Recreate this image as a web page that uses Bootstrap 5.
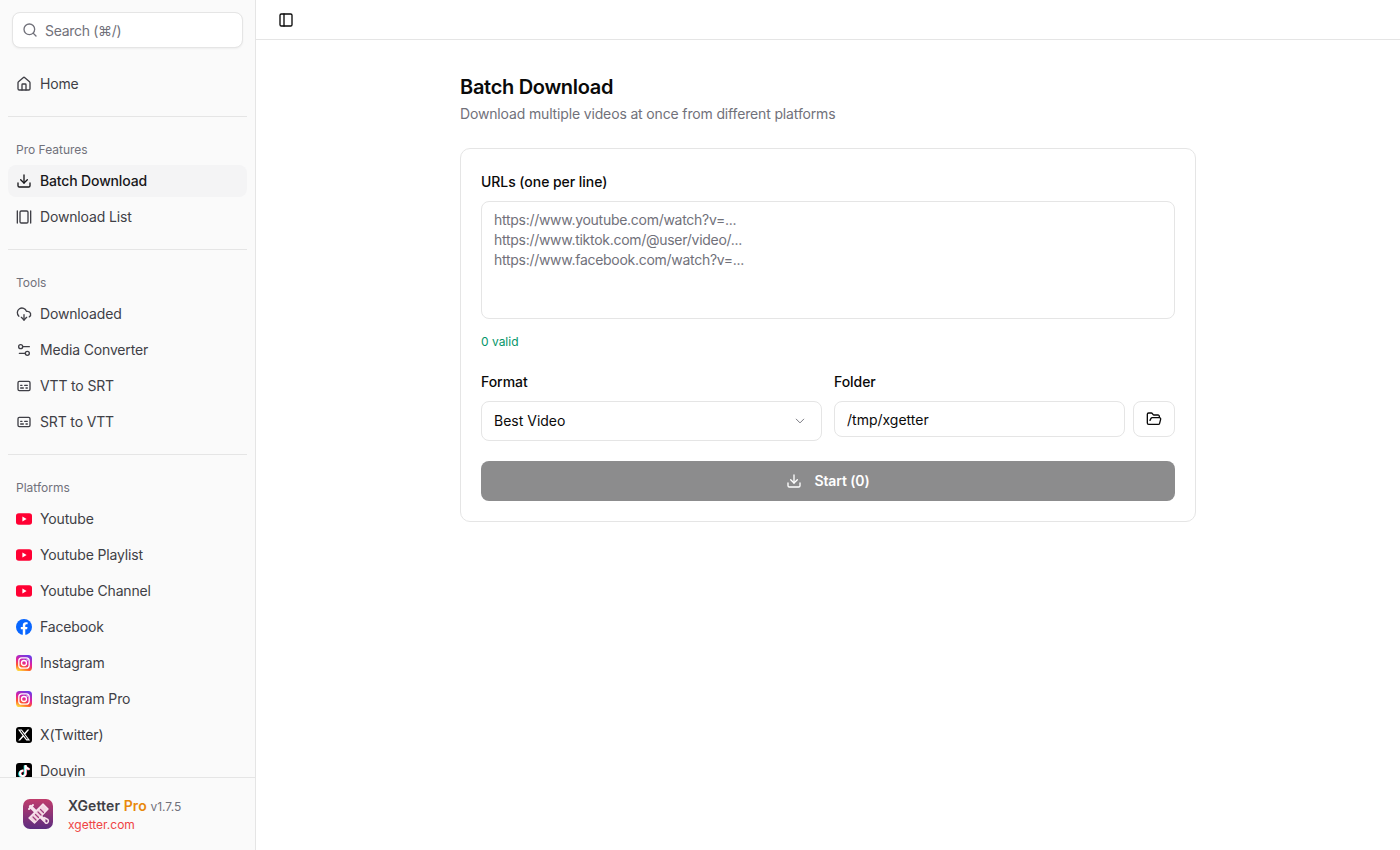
<!DOCTYPE html>
<html lang="en">
<head>
    <meta charset="UTF-8">
    <meta name="viewport" content="width=device-width, initial-scale=1.0">
    <title>XGetter Pro - Batch Download</title>
    <link href="https://cdn.jsdelivr.net/npm/bootstrap@5.3.0/dist/css/bootstrap.min.css" rel="stylesheet">
    <style>
        body { font-family: Inter, "Liberation Sans", sans-serif; font-size: 14px; letter-spacing: -.15px; color: #0a0a0a; overflow: hidden; }
        .icon { width: 16px; height: 16px; flex: none; fill: none; stroke: currentColor; stroke-width: 2; stroke-linecap: round; stroke-linejoin: round; }
        .brand { width: 16px; height: 16px; flex: none; }

        .sidebar { width: 256px; flex: none; background: #fafafa; border-right: 1px solid #e5e5e5; }
        .search-box { padding: 12px 12px 0; }
        .search-box .form-control { height: 36px; padding: 0 12px 0 32px; font-size: 14px; letter-spacing: -.3px; border-color: #e5e5e5; border-radius: 8px; box-shadow: 0 1px 2px rgba(0,0,0,.05); }
        .search-box .form-control::placeholder, .urls::placeholder { color: #71717a; opacity: 1; }
        .search-box .icon { left: 10px; top: 10px; color: #71717a; }
        .side-scroll { padding: 20px 8px 0; min-height: 0; }
        .side-link { height: 32px; padding: 0 8px; gap: 8px; border-radius: 8px; line-height: 20px; color: #3f3f46; text-decoration: none; }
        .side-link.active { background: #f4f4f5; color: #18181b; font-weight: 500; }
        .side-label { height: 32px; padding: 1px 8px 0; font-size: 12px; line-height: 16px; letter-spacing: 0; color: #71717a; }
        .side-sep { margin: 16px 0; border-top: 1px solid #e5e5e5; opacity: 1; }
        .side-foot { height: 73px; padding: 0 23px; gap: 15px; border-top: 1px solid #e5e5e5; flex: none; }
        .foot-name { font-size: 14px; line-height: 20px; letter-spacing: .1px; font-weight: 600; color: #3f3f46; padding-top: 2px; }
        .foot-name b { font-weight: 600; color: #e8890c; }
        .foot-name span { font-size: 12px; font-weight: 400; letter-spacing: 0; color: #71717a; }
        .foot-url { font-size: 12px; line-height: 16px; margin-bottom: 2px; letter-spacing: 0; color: #ef4444; text-decoration: none; }

        .topbar { height: 40px; padding: 0 22px; border-bottom: 1px solid #e5e5e5; flex: none; }
        .panel { width: 736px; padding-top: 35px; }
        .panel h1 { font-size: 20px; line-height: 24px; font-weight: 600; letter-spacing: -.3px; margin: 0; color: #0a0a0a; }
        .panel .sub { margin: 5px 0 24px; line-height: 20px; color: #71717a; }
        .panel .card { border-color: #e5e5e5; border-radius: 10px; padding: 23px 20px 20px; }
        .panel label { display: block; font-weight: 500; line-height: 20px; letter-spacing: -.05px; margin-bottom: 9px; color: #0a0a0a; }
        .urls, .panel .form-control, .panel .form-select { font-size: 14px; line-height: 20px; color: #0a0a0a; border-color: #e5e5e5; border-radius: 8px; padding-left: 12px; }
        .urls { height: 118px; resize: none; padding-top: 8px; padding-bottom: 8px; }
        .urls::placeholder { letter-spacing: -.28px; }
        .valid { font-size: 12px; line-height: 16px; letter-spacing: 0; color: #059669; margin: 15px 0 22px; }
        .fields { display: grid; grid-template-columns: 1fr 1fr; gap: 12px; }
        .panel .form-select { height: 40px; padding-top: 0; padding-bottom: 0; background-position: right 14px center; background-size: 14px 10px; background-image: url("data:image/svg+xml,%3csvg xmlns='http://www.w3.org/2000/svg' viewBox='0 0 16 16'%3e%3cpath fill='none' stroke='%2371717a' stroke-linecap='round' stroke-linejoin='round' stroke-width='1.5' d='m2 5 6 6 6-6'/%3e%3c/svg%3e"); }
        .panel .form-control.folder { height: 36px; padding-top: 0; padding-bottom: 0; }
        .btn-folder { width: 42px; height: 36px; padding: 0; border: 1px solid #e5e5e5; border-radius: 8px; color: #0a0a0a; }
        .btn-start { height: 40px; margin-top: 20px; gap: 12px; padding: 0; font-size: 14px; line-height: 20px; font-weight: 600; letter-spacing: -.1px; border: 0; border-radius: 8px; }
        .btn-start:disabled { background: #8c8c8d; color: #fff; opacity: 1; }
    </style>
</head>
<body>
    <svg width="0" height="0" class="position-absolute">
        <defs>
            <symbol id="i-search" viewBox="0 0 24 24"><circle cx="11" cy="11" r="8"/><path d="m21 21-4.3-4.3"/></symbol>
            <symbol id="i-home" viewBox="0 0 24 24"><path d="M15 21v-8a1 1 0 0 0-1-1h-4a1 1 0 0 0-1 1v8"/><path d="M3 10a2 2 0 0 1 .709-1.528l7-5.999a2 2 0 0 1 2.582 0l7 5.999A2 2 0 0 1 21 10v9a2 2 0 0 1-2 2H5a2 2 0 0 1-2-2z"/></symbol>
            <symbol id="i-download" viewBox="0 0 24 24"><path d="M21 15v4a2 2 0 0 1-2 2H5a2 2 0 0 1-2-2v-4"/><path d="m7 10 5 5 5-5"/><path d="M12 15V3"/></symbol>
            <symbol id="i-gallery" viewBox="0 0 24 24"><path d="M2 3v18"/><rect x="6" y="3" width="12" height="18" rx="2"/><path d="M22 3v18"/></symbol>
            <symbol id="i-cloud" viewBox="0 0 24 24"><path d="M12 13v8"/><path d="M4.393 15.269A7 7 0 1 1 15.71 8h1.79a4.5 4.5 0 0 1 2.436 8.284"/><path d="m8 17 4 4 4-4"/></symbol>
            <symbol id="i-settings" viewBox="0 0 24 24"><path d="M20 7h-9"/><path d="M14 17H5"/><circle cx="17" cy="17" r="3"/><circle cx="7" cy="7" r="3"/></symbol>
            <symbol id="i-captions" viewBox="0 0 24 24"><rect x="3" y="5" width="18" height="14" rx="2"/><path d="M7 15h4M15 15h2M7 11h2M13 11h4"/></symbol>
            <symbol id="i-panel" viewBox="0 0 24 24"><rect x="3" y="3" width="18" height="18" rx="2"/><path d="M9 3v18"/></symbol>
            <symbol id="i-folder" viewBox="0 0 24 24"><path d="m6 14 1.5-2.9A2 2 0 0 1 9.24 10H20a2 2 0 0 1 1.94 2.5l-1.54 6a2 2 0 0 1-1.95 1.5H4a2 2 0 0 1-2-2V5a2 2 0 0 1 2-2h3.9a2 2 0 0 1 1.69.9l.81 1.2a2 2 0 0 0 1.67.9H18a2 2 0 0 1 2 2v2"/></symbol>
            <symbol id="b-youtube" viewBox="0 0 16 16"><rect y="2.2" width="16" height="11.6" rx="2.8" fill="#ff0033"/><path d="M6.4 5.6v4.8L10.6 8z" fill="#fff"/></symbol>
            <symbol id="b-facebook" viewBox="0 0 24 24"><circle cx="12" cy="12" r="12" fill="#0866ff"/><path d="M16.7 15.5l.5-3.5h-3.3V9.8c0-1 .5-1.9 2-1.9h1.5V4.9s-1.4-.2-2.7-.2c-2.7 0-4.5 1.6-4.5 4.6V12h-3v3.5h3V24h3.7v-8.5z" fill="#fff"/></symbol>
            <linearGradient id="ig" x1="0.3" y1="1" x2="0.7" y2="0">
                <stop offset="0" stop-color="#ffd23f"/><stop offset=".25" stop-color="#ff5a2b"/><stop offset=".55" stop-color="#e11fa0"/><stop offset="1" stop-color="#6a3be8"/>
            </linearGradient>
            <symbol id="b-instagram" viewBox="0 0 16 16"><rect width="16" height="16" rx="3.6" fill="url(#ig)"/><rect x="2.8" y="2.8" width="10.4" height="10.4" rx="3" fill="none" stroke="#fff" stroke-width="1.3"/><circle cx="8" cy="8" r="2.5" fill="none" stroke="#fff" stroke-width="1.3"/><circle cx="11.1" cy="4.9" r=".75" fill="#fff"/></symbol>
            <symbol id="b-x" viewBox="0 0 32 32"><rect width="32" height="32" rx="6" fill="#000"/><g transform="translate(2.5 2.5) scale(1.125)"><path d="M18.244 2.25h3.308l-7.227 8.26 8.502 11.24H16.17l-5.214-6.817L4.99 21.75H1.68l7.73-8.835L1.254 2.25H8.08l4.713 6.231zm-1.161 17.52h1.833L7.084 4.126H5.117z" fill="#fff"/></g></symbol>
            <symbol id="b-tiktok" viewBox="0 0 32 32"><rect width="32" height="32" rx="6" fill="#000"/><g transform="translate(4.5 4) scale(1)"><path d="M12.525.02c1.31-.02 2.61-.01 3.91-.02.08 1.53.63 3.09 1.75 4.17 1.12 1.11 2.7 1.62 4.24 1.79v4.03c-1.44-.05-2.89-.35-4.2-.97-.57-.26-1.1-.59-1.62-.93-.01 2.92.01 5.84-.02 8.75-.08 1.4-.54 2.79-1.35 3.94-1.31 1.92-3.58 3.17-5.91 3.21-1.43.08-2.86-.31-4.08-1.03-2.02-1.19-3.44-3.37-3.65-5.71-.02-.5-.03-1-.01-1.49.18-1.9 1.12-3.72 2.58-4.96 1.66-1.44 3.98-2.13 6.15-1.72.02 1.48-.04 2.96-.04 4.44-.99-.32-2.15-.23-3.02.37-.63.41-1.11 1.04-1.36 1.75-.21.51-.15 1.07-.14 1.61.24 1.64 1.82 3.02 3.5 2.87 1.12-.01 2.19-.66 2.77-1.61.19-.33.4-.67.41-1.06.1-1.79.06-3.57.07-5.36.01-4.03-.01-8.05.02-12.07z" fill="#25f4ee" transform="translate(-1.6 1)"/><path d="M12.525.02c1.31-.02 2.61-.01 3.91-.02.08 1.53.63 3.09 1.75 4.17 1.12 1.11 2.7 1.62 4.24 1.79v4.03c-1.44-.05-2.89-.35-4.2-.97-.57-.26-1.1-.59-1.62-.93-.01 2.92.01 5.84-.02 8.75-.08 1.4-.54 2.79-1.35 3.94-1.31 1.92-3.58 3.17-5.91 3.21-1.43.08-2.86-.31-4.08-1.03-2.02-1.19-3.44-3.37-3.65-5.71-.02-.5-.03-1-.01-1.49.18-1.9 1.12-3.72 2.58-4.96 1.66-1.44 3.98-2.13 6.15-1.72.02 1.48-.04 2.96-.04 4.44-.99-.32-2.15-.23-3.02.37-.63.41-1.11 1.04-1.36 1.75-.21.51-.15 1.07-.14 1.61.24 1.64 1.82 3.02 3.5 2.87 1.12-.01 2.19-.66 2.77-1.61.19-.33.4-.67.41-1.06.1-1.79.06-3.57.07-5.36.01-4.03-.01-8.05.02-12.07z" fill="#fe2c55" transform="translate(1 .4)"/><path d="M12.525.02c1.31-.02 2.61-.01 3.91-.02.08 1.53.63 3.09 1.75 4.17 1.12 1.11 2.7 1.62 4.24 1.79v4.03c-1.44-.05-2.89-.35-4.2-.97-.57-.26-1.1-.59-1.62-.93-.01 2.92.01 5.84-.02 8.75-.08 1.4-.54 2.79-1.35 3.94-1.31 1.92-3.58 3.17-5.91 3.21-1.43.08-2.86-.31-4.08-1.03-2.02-1.19-3.44-3.37-3.65-5.71-.02-.5-.03-1-.01-1.49.18-1.9 1.12-3.72 2.58-4.96 1.66-1.44 3.98-2.13 6.15-1.72.02 1.48-.04 2.96-.04 4.44-.99-.32-2.15-.23-3.02.37-.63.41-1.11 1.04-1.36 1.75-.21.51-.15 1.07-.14 1.61.24 1.64 1.82 3.02 3.5 2.87 1.12-.01 2.19-.66 2.77-1.61.19-.33.4-.67.41-1.06.1-1.79.06-3.57.07-5.36.01-4.03-.01-8.05.02-12.07z" fill="#fff"/></g></symbol>
            <linearGradient id="logo-bg" x1="0" y1="0" x2="0" y2="1">
                <stop offset="0" stop-color="#c03c6c"/><stop offset="1" stop-color="#5c2c80"/>
            </linearGradient>
        </defs>
    </svg>

    <div class="d-flex vh-100">
        <aside class="sidebar d-flex flex-column">
            <div class="search-box">
                <div class="position-relative">
                    <svg class="icon position-absolute"><use href="#i-search"/></svg>
                    <input type="text" class="form-control" placeholder="Search (⌘/)">
                </div>
            </div>

            <div class="side-scroll flex-grow-1 overflow-hidden">
                <a class="side-link d-flex align-items-center" href="#"><svg class="icon"><use href="#i-home"/></svg>Home</a>
                <hr class="side-sep">

                <div class="side-label d-flex align-items-center">Pro Features</div>
                <div class="d-flex flex-column gap-1">
                    <a class="side-link active d-flex align-items-center" href="#"><svg class="icon"><use href="#i-download"/></svg>Batch Download</a>
                    <a class="side-link d-flex align-items-center" href="#"><svg class="icon"><use href="#i-gallery"/></svg>Download List</a>
                </div>
                <hr class="side-sep">

                <div class="side-label d-flex align-items-center">Tools</div>
                <div class="d-flex flex-column gap-1">
                    <a class="side-link d-flex align-items-center" href="#"><svg class="icon"><use href="#i-cloud"/></svg>Downloaded</a>
                    <a class="side-link d-flex align-items-center" href="#"><svg class="icon"><use href="#i-settings"/></svg>Media Converter</a>
                    <a class="side-link d-flex align-items-center" href="#"><svg class="icon"><use href="#i-captions"/></svg>VTT to SRT</a>
                    <a class="side-link d-flex align-items-center" href="#"><svg class="icon"><use href="#i-captions"/></svg>SRT to VTT</a>
                </div>
                <hr class="side-sep">

                <div class="side-label d-flex align-items-center">Platforms</div>
                <div class="d-flex flex-column gap-1">
                    <a class="side-link d-flex align-items-center" href="#"><svg class="brand"><use href="#b-youtube"/></svg>Youtube</a>
                    <a class="side-link d-flex align-items-center" href="#"><svg class="brand"><use href="#b-youtube"/></svg>Youtube Playlist</a>
                    <a class="side-link d-flex align-items-center" href="#"><svg class="brand"><use href="#b-youtube"/></svg>Youtube Channel</a>
                    <a class="side-link d-flex align-items-center" href="#"><svg class="brand"><use href="#b-facebook"/></svg>Facebook</a>
                    <a class="side-link d-flex align-items-center" href="#"><svg class="brand"><use href="#b-instagram"/></svg>Instagram</a>
                    <a class="side-link d-flex align-items-center" href="#"><svg class="brand"><use href="#b-instagram"/></svg>Instagram Pro</a>
                    <a class="side-link d-flex align-items-center" href="#"><svg class="brand"><use href="#b-x"/></svg>X(Twitter)</a>
                    <a class="side-link d-flex align-items-center" href="#"><svg class="brand"><use href="#b-tiktok"/></svg>Douyin</a>
                </div>
            </div>

            <div class="side-foot d-flex align-items-center">
                <svg width="30" height="30" viewBox="0 0 30 30" class="flex-shrink-0">
                    <rect width="30" height="30" rx="7" fill="url(#logo-bg)"/>
                    <g fill="none" stroke="#f7e3ec" stroke-linecap="round" stroke-linejoin="round">
                        <path d="M7.5 7.5 21 21" stroke-width="3.2"/>
                        <path d="M10 6 6 10" stroke-width="2"/>
                        <path d="M20 20.5l2.5 3.5a2 2 0 1 0 1.5-4l-3-1.5" stroke-width="1.5"/>
                        <path d="M20 5l5 5-13.5 14-5.5-5z" fill="#f3d5e2" stroke-width="1.4"/>
                        <path d="M10 18l3 3M12.5 15.5l3 3M15 13l3 3M17.5 10.5l3 3" stroke="#a13c7c" stroke-width="1.2"/>
                    </g>
                </svg>
                <div>
                    <div class="foot-name">XGetter <b>Pro</b> <span>v1.7.5</span></div>
                    <a class="foot-url d-block" href="#">xgetter.com</a>
                </div>
            </div>
        </aside>

        <main class="flex-grow-1 d-flex flex-column">
            <div class="topbar d-flex align-items-center">
                <svg class="icon"><use href="#i-panel"/></svg>
            </div>
            <div class="d-flex justify-content-center">
                <div class="panel">
                    <h1>Batch Download</h1>
                    <p class="sub">Download multiple videos at once from different platforms</p>
                    <div class="card">
                        <label for="urls">URLs (one per line)</label>
                        <textarea id="urls" class="form-control urls" placeholder="https://www.youtube.com/watch?v=...&#10;https://www.tiktok.com/@user/video/...&#10;https://www.facebook.com/watch?v=..."></textarea>
                        <div class="valid">0 valid</div>
                        <div class="fields">
                            <div>
                                <label for="format">Format</label>
                                <select id="format" class="form-select"><option>Best Video</option></select>
                            </div>
                            <div>
                                <label for="folder">Folder</label>
                                <div class="d-flex gap-2">
                                    <input id="folder" type="text" class="form-control folder" value="/tmp/xgetter">
                                    <button type="button" class="btn btn-folder d-flex align-items-center justify-content-center flex-shrink-0"><svg class="icon"><use href="#i-folder"/></svg></button>
                                </div>
                            </div>
                        </div>
                        <button type="button" class="btn btn-start w-100 d-flex align-items-center justify-content-center" disabled><svg class="icon"><use href="#i-download"/></svg>Start (0)</button>
                    </div>
                </div>
            </div>
        </main>
    </div>
    <script src="https://cdn.jsdelivr.net/npm/bootstrap@5.3.0/dist/js/bootstrap.bundle.min.js"></script>
</body>
</html>
